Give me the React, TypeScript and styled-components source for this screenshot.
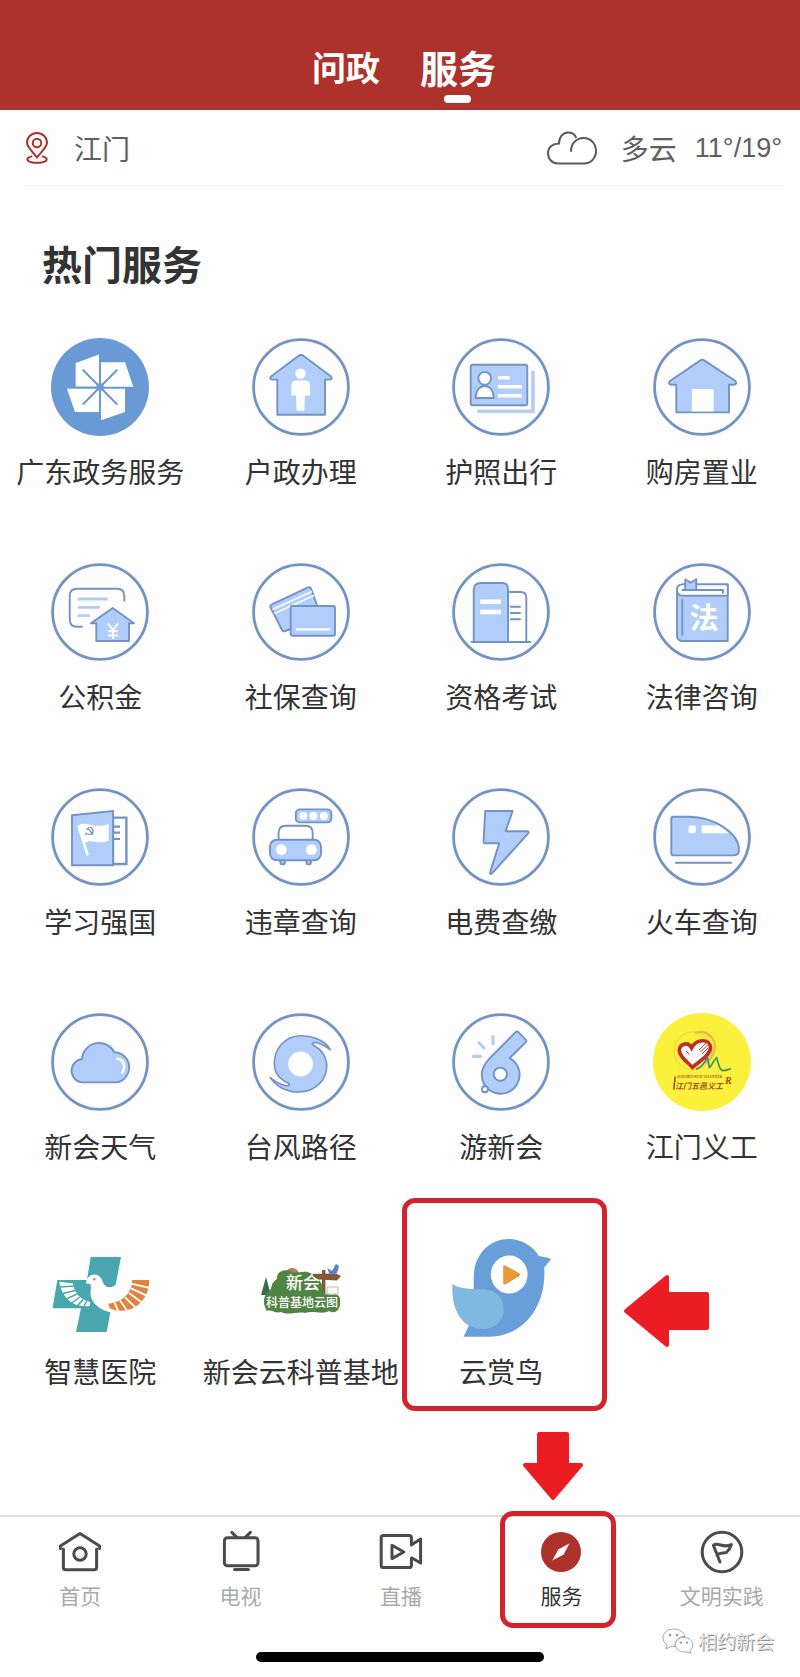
import React from 'react';
import styled, { createGlobalStyle } from 'styled-components';

const RED = '#ac322b';
const MARK = '#d3232e';
const ARROW = '#ec1c24';
const LINE = '#7393c5';
const FILL = '#b1cefa';
const SOFT = '#b7cdf0';
const CJK = '"Noto Sans CJK SC"';

const GlobalStyle = createGlobalStyle`
  *, *::before, *::after { box-sizing: border-box; }
  body {
    margin: 0;
    background: #fefefe;
    color: #333;
    font-family: ${CJK}, sans-serif;
    overflow-x: hidden;
  }
  button { border: 0; background: none; padding: 0; font-family: inherit; cursor: pointer; }
  a { color: inherit; text-decoration: none; }
  svg { display: block; overflow: visible; }
`;

const Page = styled.div`
  display: flex;
  flex-direction: column;
`;

const Header = styled.header`
  display: flex;
  justify-content: center;
  align-items: flex-end;
  gap: 40px;
  height: 110px;
  padding: 0 0 7px 8px;
  background: ${RED};
`;

const Tab = styled.button<{ $active?: boolean }>`
  display: flex;
  flex-direction: column;
  align-items: center;
  gap: 3px;
  color: #fff;
  font-size: ${(p) => (p.$active ? 38 : 34)}px;
  font-weight: 700;
  line-height: 50px;
  &::after {
    content: '';
    width: 27px;
    height: 8px;
    border-radius: 4px;
    background: ${(p) => (p.$active ? '#fff' : 'transparent')};
  }
`;

const WeatherBar = styled.section`
  display: flex;
  align-items: center;
  height: 76px;
  margin: 0 18px 0 25px;
  border-bottom: 1px solid #f3f3f3;
  color: #5f5f5f;
  font-size: 28px;
  line-height: 40px;
`;

const Place = styled.button`
  display: flex;
  align-items: center;
  gap: 25px;
  margin-right: auto;
  color: inherit;
  font-size: inherit;
  line-height: inherit;
`;

const Sky = styled.span`
  margin: 0 18px 0 24px;
`;

const Temperature = styled.span`
  font-family: "Liberation Sans", Arial, sans-serif;
  font-size: 27px;
`;

const Heading = styled.h1`
  margin: 47px 42px 45px;
  font-size: 40px;
  font-weight: 700;
  line-height: 60px;
`;

const Grid = styled.ul`
  display: grid;
  grid-template-columns: repeat(4, 1fr);
  row-gap: 71px;
  list-style: none;
  margin: 0 -2px 0 0;
  padding: 0 0 123px;
`;

const Cell = styled.li`
  position: relative;
`;

const Service = styled.a`
  display: flex;
  flex-direction: column;
  align-items: center;
  gap: 15px;
  font-size: 28px;
  line-height: 41px;
  white-space: nowrap;
`;

const Highlight = styled.span<{ $inset: string }>`
  position: absolute;
  inset: ${(p) => p.$inset};
  border: 5px solid ${MARK};
  border-radius: 13px;
  pointer-events: none;
`;

const Pointer = styled.svg<{ $left: number; $top: number }>`
  position: absolute;
  left: ${(p) => p.$left}px;
  top: ${(p) => p.$top}px;
  pointer-events: none;
`;

const Footer = styled.footer`
  position: relative;
  border-top: 2px solid #dedede;
  padding: 0 0 14px;
`;

const Nav = styled.nav`
  display: grid;
  grid-template-columns: repeat(5, 1fr);
  margin-right: -2px;
`;

const NavItem = styled.a<{ $active?: boolean }>`
  position: relative;
  display: flex;
  flex-direction: column;
  align-items: center;
  gap: 6px;
  padding-top: 13px;
  color: ${(p) => (p.$active ? '#333' : '#a9a9a9')};
  font-size: 21px;
  line-height: 30px;
`;

const HomeBar = styled.div`
  width: 36%;
  height: 10px;
  margin: 42px auto 0;
  border-radius: 5px;
  background: #000;
`;

const Watermark = styled.div`
  position: absolute;
  right: 26px;
  bottom: 21px;
  display: flex;
  align-items: center;
  gap: 4px;
  color: #e6e6e6;
  font-size: 19px;
  line-height: 28px;
  text-shadow: 1px 1px 0 #8c8c8c;
`;

const Disc = ({ children }: { children: React.ReactNode }) => (
  <svg width="98" height="98" viewBox="0 0 98 98" fill={FILL} stroke={LINE} strokeWidth="1.9" strokeLinejoin="round" strokeLinecap="round" aria-hidden="true">
    <circle cx="49" cy="49" r="47.4" fill="none" strokeWidth="2.8" />
    {children}
  </svg>
);

const Pinwheel = () => (
  <svg width="98" height="98" viewBox="0 0 98 98" aria-hidden="true">
    <circle cx="49" cy="49" r="49" fill="#699ad6" />
    <g fill="#fff">
      <path d="M24.7 25 48 16.4V48.6H24.7zM50 24.3H74L82.3 48.7H50zM50 50.7H74V74L50 82.3zM16 50.7H48V74H24z" />
    </g>
    <path d="M32.3 32.3 65.7 66M65.7 32.3 32.3 66" stroke="#699ad6" strokeWidth="2" strokeLinecap="round" />
    <rect x="45.6" y="45.6" width="7" height="7" rx="1.5" fill="#699ad6" />
  </svg>
);

const Household = () => (
  <Disc>
    <path d="M47 17.6Q49 16 51 17.6L79 38.6Q81 41 78 41.6H73V76.7H25.3V41.6H20Q17 41 19 38.6z" />
    <g fill="#fff" stroke="none">
      <circle cx="48.5" cy="35.6" r="5.2" />
      <path d="M44 42.6H53Q58 42.6 58 48V57.6H53L52.3 72.7H44.6L44 57.6H39.4V48Q39.4 42.6 44 42.6z" />
    </g>
  </Disc>
);

const Passport = () => (
  <Disc>
    <path d="M81 34.5V73.3H27" fill="none" stroke={SOFT} strokeWidth="3.6" strokeLinejoin="miter" strokeLinecap="square" />
    <rect x="18.7" y="26.7" width="56.6" height="40.6" rx="2" />
    <g fill="#fff">
      <path d="M23.7 60C23.7 52 28 48 32.7 48S41.7 52 41.7 60z" />
      <circle cx="32.7" cy="40.3" r="6.4" />
    </g>
    <path d="M46 39.7H57.7M46 48.7H69.7M46 57.7H69.7" stroke="#fff" strokeWidth="3.4" strokeLinecap="butt" />
  </Disc>
);

const Housing = () => (
  <Disc>
    <path d="M47 22.6Q49.3 21 51.6 22.6L82.4 43Q84.6 46 81 46.7H76V74.4H23.3V46.7H18Q14.6 46 17 43z" />
    <rect x="38.8" y="51" width="21.8" height="22.4" fill="#fff" stroke="none" />
  </Disc>
);

const Fund = () => (
  <Disc>
    <path d="M73.3 37.7V33Q73.3 25.7 66 25.7H26Q18.7 25.7 18.7 33V56.4Q18.7 63.7 26 63.7H31" fill="none" />
    <path d="M26.7 36H56.7M26.7 44.3H49M26.7 52.7H39" stroke={SOFT} strokeWidth="2.8" strokeLinecap="butt" />
    <path d="M61.7 45 83 60.3H78V78H45.3V60.3H40z" />
    <path d="M57 60.5 62 67 67 60.5M62 67V76M57 68.2H67M57 72.4H67" fill="none" stroke="#fff" strokeWidth="2" strokeLinecap="butt" />
  </Disc>
);

const Insurance = () => (
  <Disc>
    <path d="M20 41.4 56 24.4Q58 23.6 59 25.6L70 56 33 68Q31 68.8 30 67L18.4 44Q17.6 42.4 20 41.4z" />
    <path d="M20.5 46.5 60 28.5M22.5 50.6 62 32.5" stroke="#fff" strokeWidth="1.4" strokeLinecap="butt" />
    <rect x="38.7" y="43" width="44.3" height="29.7" rx="2" />
    <path d="M44.7 66.3H77.3" stroke="#fff" strokeWidth="2.2" />
  </Disc>
);

const Exam = () => (
  <Disc>
    <path d="M56 79V29H69Q74.3 29 74.3 35V79z" fill="#fff" />
    <path d="M21.7 79V27Q21.7 20 29 20H50Q56 20 56 26V79z" />
    <path d="M28.3 38.7H49M28.3 49H49" stroke="#fff" strokeWidth="4.4" strokeLinecap="butt" />
    <path d="M58.7 43.7H68M58.7 50H68M58.7 56.3H68M19.7 79H78.3" />
  </Disc>
);

const Law = () => (
  <Disc>
    <path d="M74.7 21.4H30Q24 21.4 24 27.4V72.4Q24 78 30 78H74.7z" />
    <path d="M74.7 21.4H30Q24 21.4 24 27T30 32.7H74.7z" fill="#fff" />
    <path d="M29.5 27H70V30" fill="none" />
    <path d="M32.2 27V16.2L37.6 19.8 43.2 16.2V27z" />
    <path d="M29.3 37V71.7" fill="none" />
    <text x="51" y="66" textAnchor="middle" fontFamily={CJK} fontSize="29" fontWeight="700" fill="#fff" stroke="none">法</text>
  </Disc>
);

const Study = () => (
  <Disc>
    <path d="M62 29.6H75.4V76H62z" fill="#fff" strokeWidth="2.4" strokeLinejoin="miter" />
    <path d="M62.7 38.7H69M62.7 44.7H69M62.7 51H69" strokeWidth="2.2" strokeLinecap="butt" />
    <path d="M21 27.3 62 23V77.3H21z" strokeLinejoin="miter" />
    <path d="M27.8 38.5 36.4 66.4" stroke="#fff" strokeWidth="2.6" />
    <path d="M28 37C35 32.5 44 41.5 57.7 36V52.5C48 57.5 42 50 33.4 55z" fill="#fff" stroke="none" />
    <path d="M39.5 39.2C43 41 42.8 46 39 46.4Q37 46.6 35.4 45.4M35.6 41.4 38 39.6M37 40.6 42 46.4M35.4 45.4 34.2 46.6" fill="none" strokeWidth="1.3" />
  </Disc>
);

const Car = () => (
  <Disc>
    <path d="M26.6 53V45Q26.6 37.7 34 37.7H53.4Q60.7 37.7 60.7 45V53" fill="#fff" />
    <path d="M28.4 72V74.4Q28.4 76.4 30.6 76.4T33 74.4V72M54.4 72V74.4Q54.4 76.4 56.6 76.4T59 74.4V72" />
    <rect x="18" y="51.8" width="51" height="20.4" rx="6.6" />
    <rect x="43.8" y="21.4" width="35.6" height="13" rx="4" />
    <g fill="#fff" stroke="none">
      <circle cx="29.3" cy="61.6" r="5.4" />
      <circle cx="59.4" cy="61.6" r="5.4" />
      <circle cx="51.2" cy="27.9" r="4" />
      <circle cx="61.5" cy="27.9" r="4" />
      <circle cx="71.8" cy="27.9" r="4" />
    </g>
  </Disc>
);

const Power = () => (
  <Disc>
    <path d="M33.2 23H60.6L53.6 43.2H75.5Q77.4 43.6 76 45.6L40 85.4Q38 86.8 38 84.6L47.2 55.3H33Q31.6 55.3 31.6 53.6z" />
  </Disc>
);

const Train = () => (
  <Disc>
    <path d="M20.5 28.7H36C62 28.7 86 46 86 61.4Q86 67.4 80 67.4H20.5Q18.3 67.4 18.3 65.2V30.9Q18.3 28.7 20.5 28.7z" />
    <g fill="#fff" stroke="none">
      <rect x="35.6" y="37.6" width="7.2" height="7.6" rx="1.6" />
      <path d="M50 37.6H65.5Q71 40.6 75.6 45.2H50Q48.6 45.2 48.6 43.8V39Q48.6 37.6 50 37.6z" />
    </g>
    <path d="M22.8 74.7H78.2" />
  </Disc>
);

const Forecast = () => (
  <Disc>
    <path d="M30.7 69.4A11.8 11.8 0 0 1 31 46A17.2 17.2 0 0 1 63.4 39.2A15.2 15.2 0 0 1 65.4 69.4z" />
    <path d="M66 45.8C73 46 75 54 71.4 59.4" fill="none" stroke="#fff" strokeWidth="2.6" />
  </Disc>
);

const Typhoon = () => (
  <Disc>
    <path d="M78.3 36.7C72 26 58 22.4 48 22.7C33 23 22 36 22.3 51C22.5 60 27 66 36 70C40 72.5 35 73.5 31 72C25 70 21 67 18.3 64.3C24 74 36 79.5 47.3 79C63 78.5 75 67 74.7 53C74.5 43 70 37 62 32.5C58 30 62 29 66 30C71 31.5 75 34 78.3 36.7z" strokeWidth="1.6" />
    <circle cx="48.6" cy="51" r="12.4" fill="#fff" stroke="none" />
  </Disc>
);

const Whistle = () => (
  <Disc>
    <path d="M63.6 19.2Q65 18 66.4 19.2L73.8 26.6Q75 28 73.8 29.2L57.6 45.2A18.9 18.9 0 1 1 34 50Q35.4 48 37 46z" />
    <circle cx="48.3" cy="61.2" r="6.6" fill="#fff" />
    <circle cx="33" cy="76.2" r="3" fill="#fff" />
    <path d="M21.5 43.4H28.5M27.2 30 32 35M41 23.6V30.6" stroke={SOFT} strokeWidth="3.2" />
  </Disc>
);

const Volunteer = () => (
  <svg width="98" height="98" viewBox="0 0 98 98" fill="none" aria-hidden="true">
    <circle cx="49" cy="49" r="49" fill="#fbf03c" />
    <circle cx="40" cy="38" r="19" stroke="#f3cf3d" strokeWidth="1" />
    <path d="M42 20C54 16 65 26 61 39Q58 47 52 50" stroke="#e6bd45" strokeWidth="2.4" />
    <path d="M38.6 35C35 28 26 31 26.4 38C27 45 36 50 39.4 54.4C45 49 57 43 57.6 34.6C57 26 44 25 38.6 35z" fill="#fff" stroke="#bd2f22" strokeWidth="3.6" />
    <path d="M46 37 53 30M47.6 39 54.6 32M49 41 55.4 34.6M33 38 36.4 41.6" stroke="#bd2f22" strokeWidth="1" />
    <path d="M43 56C49 55.6 52 48 54.6 44.8L56.4 55" stroke="#2d7f9d" strokeWidth="1.5" />
    <path d="M56.4 55C59 52 61.6 46 63.6 44.6C66 51 66 59 72 57.4Q75 57 78 55.6" stroke="#3a9a55" strokeWidth="1.7" />
    <g fill="#a5501c" fontWeight="700">
      <text x="24" y="65" fontFamily="Liberation Serif" fontSize="3">JIANGMEN WUYI VOLUNTEER</text>
      <text x="22" y="76" fontFamily={CJK} fontStyle="italic" fontSize="8">江门五邑义工</text>
      <path d="M21.4 63.4H23L21.6 76.6H20z" />
      <text x="72" y="71" fontFamily="Liberation Serif" fontStyle="italic" fontSize="10">R</text>
    </g>
  </svg>
);

const Hospital = () => (
  <svg width="98" height="98" viewBox="0 0 98 98" fill="none" aria-hidden="true">
    <path d="M39.7 19H70L59.4 74 55.7 94H25L30 70.3H1.6L6.3 42H36z" fill="#4aa6ae" />
    <path d="M34.6 45.4 36 41.6C39 34.6 48 35 51 41.6C53 50 59 51.4 66 46L61 74.6C51 73 41.6 67 39.8 58C39 52 41 48 39 46z" fill="#fff" />
    <path d="M8.3 43.7 22 45.4C23 55 30 61.6 39 64L38.6 68C22 70 11 60 8.3 43.7z" fill="#fff" />
    <path d="M23 48 9 49M24 52.4 10 56M26 56 14 61.6M29 59 19 66M32 61.6 25.4 69M35.6 63.4 32 70" stroke="#4aa6ae" strokeWidth="1.5" />
    <path d="M98.3 42H81C82 55 70 65 57 65.6L59 70.6C78 78 98 66 98.3 42z" fill="#df8540" />
    <path d="M80 45.6 99 50M80 50.4 98 58.6M78 55 93 66M74 59.4 86 71M69 62.6 77 74M63.6 64.6 68 75" stroke="#fff" strokeWidth="1.8" />
    <circle cx="43.2" cy="41.2" r="1.3" fill="#df8540" />
  </svg>
);

const ScienceBase = () => (
  <svg width="98" height="98" viewBox="0 0 98 98" fill="none" aria-hidden="true">
    <path d="M14 39 19 57H9zM21 44 25 58H17z" fill="#3d6b4d" />
    <path d="M56 36 84 35.6 89 38 85 42.6 57 41z" fill="#84563a" />
    <path d="M70 32H73.4V56H70z" fill="#84563a" />
    <path d="M75 49H86V56H75z" fill="#fff" stroke="#c9b394" strokeWidth="1" />
    <path d="M33 35C36 28 45 29 47 35z" fill="#b57c5b" />
    <path d="M75 30 80 33 84 26 87 28 85 35 78 37z" fill="#5286ba" />
    <path d="M13 58C11 63 12 69 15 73C20 71 23 76 29 74C37 78 45 73 53 75C61 72 70 77 77 73C84 77 89 70 88 64C89 58 85 55 80 57L72 56C72 47 67 40 60 36C53 31 46 36 40 34C31 29 24 35 25 41C19 44 21 52 15 55z" fill="#4f8442" />
    <g fill="#fff" fontFamily={CJK} fontWeight="500" textAnchor="middle">
      <text x="51" y="51" fontSize="17">新会</text>
      <text x="50" y="69" fontSize="12">科普基地云图</text>
    </g>
  </svg>
);

const Bird = () => (
  <svg width="98" height="98" viewBox="0 0 98 98" aria-hidden="true">
    <path d="M21.7 40C21.7 16 38 1 57 1C70 1 82 9 86.8 18L97 20Q99.2 20.8 98 22.6L92.2 29.6C94.6 66 74 98.8 36 98.8H11.6L18 85L21.7 52z" fill="#689fdb" />
    <path d="M.4 46C8 51 18 51.2 30 51.2C44 51.2 51.8 60 51.8 71.4C51.8 83.6 42 91 31 91C14 91-1 78 .4 46z" fill="#80b8e0" />
    <ellipse cx="57.2" cy="36.6" rx="18.4" ry="19" fill="#fff" />
    <path d="M53 27.4 67 35Q69 36.6 67 38.2L53.6 46.4Q51.4 47 51.2 45V28.6Q51.4 26.6 53 27.4z" fill="#e69a38" />
  </svg>
);

const services = [
  { name: '广东政务服务', Icon: Pinwheel },
  { name: '户政办理', Icon: Household },
  { name: '护照出行', Icon: Passport },
  { name: '购房置业', Icon: Housing },
  { name: '公积金', Icon: Fund },
  { name: '社保查询', Icon: Insurance },
  { name: '资格考试', Icon: Exam },
  { name: '法律咨询', Icon: Law },
  { name: '学习强国', Icon: Study },
  { name: '违章查询', Icon: Car },
  { name: '电费查缴', Icon: Power },
  { name: '火车查询', Icon: Train },
  { name: '新会天气', Icon: Forecast },
  { name: '台风路径', Icon: Typhoon },
  { name: '游新会', Icon: Whistle },
  { name: '江门义工', Icon: Volunteer },
  { name: '智慧医院', Icon: Hospital },
  { name: '新会云科普基地', Icon: ScienceBase },
  { name: '云赏鸟', Icon: Bird, marked: true },
];

const NavIcon = ({ children }: { children: React.ReactNode }) => (
  <svg width="44" height="44" viewBox="0 0 44 44" fill="none" stroke="#4b4b4b" strokeWidth="3" strokeLinecap="round" strokeLinejoin="round" aria-hidden="true">
    {children}
  </svg>
);

const navItems = [
  {
    name: '首页',
    icon: (
      <>
        <path d="M5.4 19V37.5Q5.4 39.8 7.7 39.8H36.3Q38.6 39.8 38.6 37.5V19M2.4 18.6V16L22 3.4 41.6 16V18.6" />
        <circle cx="22" cy="24" r="6.2" />
      </>
    ),
  },
  {
    name: '电视',
    icon: (
      <>
        <rect x="5.4" y="7.8" width="33.6" height="28" rx="3" />
        <path d="M12.8 2.4 17.8 7.4M31.4 2.4 26.4 7.4M15.6 39.6H29.4" />
      </>
    ),
  },
  {
    name: '直播',
    icon: (
      <>
        <path d="M32.4 15V7.6Q32.4 5.4 30.2 5.4H4.4Q2.2 5.4 2.2 7.6V35.4Q2.2 37.6 4.4 37.6H30.2Q32.4 37.6 32.4 35.4V28M33 14.6 41.6 9V33L33 28" />
        <path d="M13 15.2V28.6L24.8 22z" />
      </>
    ),
  },
  {
    name: '服务',
    active: true,
    icon: (
      <>
        <circle cx="22" cy="22" r="20" fill={RED} stroke="none" />
        <path d="M30.6 13.2 24.6 24.4 13.4 30.4 19.2 19.4z" fill="#fff" stroke="none" />
      </>
    ),
  },
  {
    name: '文明实践',
    icon: (
      <>
        <circle cx="22" cy="22" r="19.8" />
        <path d="M20 32 13.4 15.4C18 11.4 23 19 31.4 14.6C30.4 18 29 20.4 26.4 22.4C23 23.6 20 22 17 25" />
      </>
    ),
  },
];

export default function App() {
  return (
    <Page>
      <GlobalStyle />
      <Header>
        <Tab type="button">问政</Tab>
        <Tab type="button" $active>服务</Tab>
      </Header>
      <main>
        <WeatherBar>
          <Place type="button">
            <svg width="24" height="32" viewBox="0 0 24 32" fill="none" stroke={RED} strokeWidth="2" strokeLinecap="round" aria-hidden="true">
              <path d="M12 25.4C6 18 2 15 2 10.6A10 9.6 0 0 1 22 10.6C22 15 18 18 12 25.4z" />
              <circle cx="12" cy="11" r="4.2" />
              <path d="M6.4 24.4C-1 26.4 2 30.8 12 30.8S25 26.4 17.6 24.4" />
            </svg>
            江门
          </Place>
          <svg width="50" height="34" viewBox="0 0 50 34" fill="none" stroke="#5a5a5a" strokeWidth="2" strokeLinecap="round" aria-hidden="true">
            <path d="M24 20C24 12 30 7 36.4 7C44 7 49 13 49 20S44 32.4 37 32.4H11C5 32.4 1 28 1 22S6 12.4 12 12.4C12 6 16 1.6 21 1.6C25 1.6 27.6 3.4 29 6.2" />
          </svg>
          <Sky>多云</Sky>
          <Temperature>11°/19°</Temperature>
        </WeatherBar>
        <Heading>热门服务</Heading>
        <Grid>
          {services.map(({ name, Icon, marked }) => (
            <Cell key={name}>
              <Service href="#">
                <Icon />
                {name}
              </Service>
              {marked && (
                <>
                  <Highlight $inset="-40px -5px -19px 1px" />
                  <Pointer $left={223} $top={37} width="86" height="72" viewBox="0 0 86 72" fill={ARROW} stroke={ARROW} strokeWidth="4" strokeLinejoin="round" aria-hidden="true">
                    <path d="M2 36 43 2V19H83V53H43V70z" />
                  </Pointer>
                </>
              )}
            </Cell>
          ))}
        </Grid>
      </main>
      <Footer>
        <Nav>
          {navItems.map(({ name, icon, active }) => (
            <NavItem key={name} href="#" $active={active}>
              <NavIcon>{icon}</NavIcon>
              {name}
              {active && (
                <>
                  <Highlight $inset="-6px 26px -18px 19px" />
                  <Pointer $left={42} $top={-85} width="60" height="68" viewBox="0 0 60 68" fill={ARROW} stroke={ARROW} strokeWidth="4" strokeLinejoin="round" aria-hidden="true">
                    <path d="M16 2H44V33H58L30 66 2 33H16z" />
                  </Pointer>
                </>
              )}
            </NavItem>
          ))}
        </Nav>
        <HomeBar />
        <Watermark>
          <svg width="32" height="26" viewBox="0 0 32 26" fill="#fdfdfd" stroke="#aaa" strokeWidth="1" aria-hidden="true">
            <path d="M12 1C5 1 1 5 1 10Q1 14 5 17L4 21 9 18.6H13C12 13 17 8 23 8.4C22 4 17 1 12 1z" />
            <path d="M22 9.4C16.6 9.4 13.4 13 13.4 16.8C13.4 21 17 24 22 24H25L29 25.4 28 22.6Q30.8 20 30.8 16.8C30.8 13 27 9.4 22 9.4z" />
            <g fill="#999" stroke="none">
              <circle cx="8" cy="7" r="1.3" />
              <circle cx="15" cy="7" r="1.3" />
              <circle cx="19" cy="14.6" r="1.2" />
              <circle cx="25" cy="14.6" r="1.2" />
            </g>
          </svg>
          相约新会
        </Watermark>
      </Footer>
    </Page>
  );
}
